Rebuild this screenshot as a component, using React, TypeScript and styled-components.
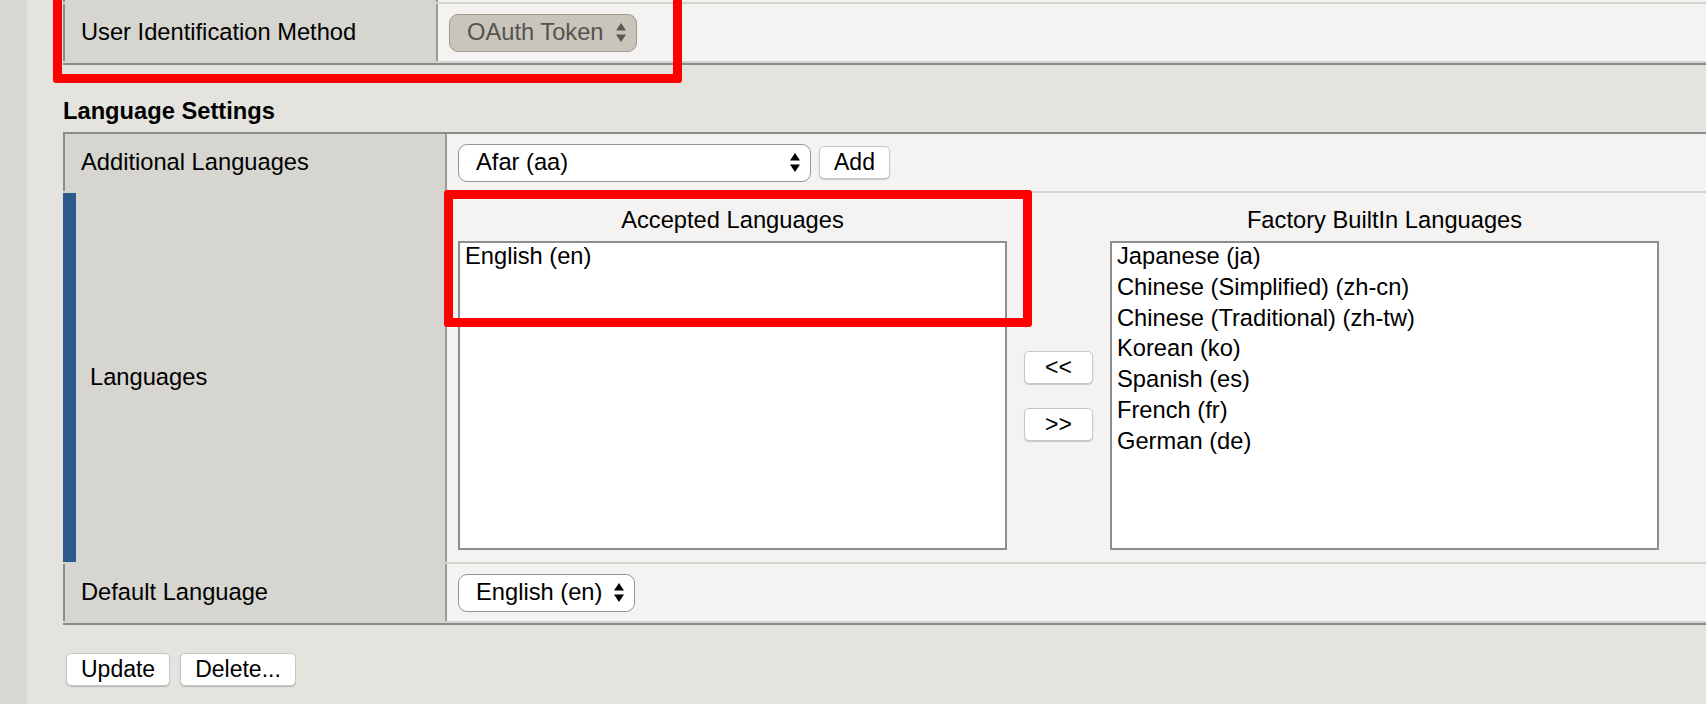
import React from "react";
import styled, { createGlobalStyle } from "styled-components";

const GlobalStyle = createGlobalStyle`
  html, body {
    margin: 0;
    padding: 0;
    background: #e4e3de;
    overflow: hidden;
  }
  body {
    font-family: "Liberation Sans", Arial, Helvetica, sans-serif;
    color: #000;
  }
  *, *::before, *::after { box-sizing: border-box; }
`;

const Page = styled.div`
  position: relative;
  display: flex;
  width: 1706px;
  height: 704px;
  overflow: hidden;
  background: #e4e3de;
`;

const Sidebar = styled.aside`
  flex: 0 0 27px;
  background: #d9d8d3;
`;

const Main = styled.main`
  flex: 1;
  min-width: 0;
  padding-left: 36px;
  font-size: 23.7px;
  line-height: 27px;
`;

const Table = styled.div<{ $topBorder?: boolean }>`
  display: flex;
  flex-direction: column;
  width: calc(100% + 40px);
  border-top: ${(p) => (p.$topBorder ? "2px solid #8c8c8c" : "none")};
  border-bottom: 2px solid #8c8c8c;
`;

const Row = styled.div<{ $label: number; $height?: number }>`
  display: grid;
  grid-template-columns: ${(p) => p.$label}px 1fr;
  min-height: ${(p) => (p.$height ? `${p.$height}px` : "auto")};
  border-bottom: 2px solid #d5d3cf;
`;

const ClippedRow = styled(Row)`
  height: 4px;
  min-height: 4px;
`;

const LabelCell = styled.div<{ $accent?: boolean }>`
  display: flex;
  align-items: center;
  background: #d6d5d0;
  border-left: ${(p) => (p.$accent ? "13px solid #2c5a8c" : "2px solid #8c8c8c")};
  border-right: 2px solid #9a9a9a;
  padding-left: ${(p) => (p.$accent ? "14px" : "16px")};
  white-space: nowrap;
`;

const ValueCell = styled.div`
  display: flex;
  align-items: center;
  gap: 8px;
  padding: 0 11px;
  background: #f4f3f1;
`;

const SectionTitle = styled.h2`
  margin: 33px 0 7px;
  font-size: 23.7px;
  line-height: 27px;
  font-weight: bold;
`;

const SelectBox = styled.div<{ $disabled?: boolean; $width?: number }>`
  display: inline-flex;
  align-items: center;
  justify-content: space-between;
  gap: 12px;
  height: 38px;
  width: ${(p) => (p.$width ? `${p.$width}px` : "auto")};
  padding: 0 10px 0 17px;
  background: ${(p) => (p.$disabled ? "#c9c5bb" : "#ffffff")};
  color: ${(p) => (p.$disabled ? "#555350" : "#000")};
  border: 1px solid ${(p) => (p.$disabled ? "#9e9a92" : "#959595")};
  border-radius: 9px;
  white-space: nowrap;
  line-height: 27px;
`;

const Button = styled.button<{ $width?: number }>`
  height: 33px;
  width: ${(p) => (p.$width ? `${p.$width}px` : "auto")};
  padding: 0 14px;
  font-family: inherit;
  font-size: 23px;
  line-height: 1;
  color: #000;
  background: #ffffff;
  border: 1px solid #c6c6c6;
  border-radius: 5px;
  box-shadow: 0 1px 1px rgba(0, 0, 0, 0.18);
`;

const TransferGrid = styled.div`
  display: grid;
  grid-template-columns: 549px 103px 549px;
  grid-template-rows: 27px 309px;
  row-gap: 7px;
  padding: 14px 11px 12px;
  background: #f4f3f1;
`;

const ListHeader = styled.div<{ $col: number }>`
  grid-column: ${(p) => p.$col};
  grid-row: 1;
  text-align: center;
  white-space: nowrap;
`;

const ListBox = styled.div<{ $col: number }>`
  grid-column: ${(p) => p.$col};
  grid-row: 2;
  background: #ffffff;
  border: 2px solid #8e8e8e;
  padding: 1px 5px 0;
  overflow: hidden;
`;

const Option = styled.div`
  height: 30.8px;
  line-height: 24px;
  white-space: nowrap;
`;

const MoveButtons = styled.div`
  grid-column: 2;
  grid-row: 2;
  display: flex;
  flex-direction: column;
  align-items: center;
  justify-content: center;
  gap: 24px;
`;

const Footer = styled.div`
  display: flex;
  gap: 10px;
  margin-top: 28px;
  padding-left: 3px;
`;

const Annotation = styled.div<{ $x: number; $y: number; $w: number; $h: number }>`
  position: absolute;
  left: ${(p) => p.$x}px;
  top: ${(p) => p.$y}px;
  width: ${(p) => p.$w}px;
  height: ${(p) => p.$h}px;
  border: 9px solid #ff0000;
  border-radius: 3px;
  pointer-events: none;
`;

const Arrows = ({ color = "#000" }: { color?: string }) => (
  <svg width="10" height="19" viewBox="0 0 10 19" aria-hidden="true">
    <polygon points="0,7.5 5,0 10,7.5" fill={color} />
    <polygon points="0,11.5 10,11.5 5,19" fill={color} />
  </svg>
);

const Select = ({
  value,
  disabled,
  width,
}: {
  value: string;
  disabled?: boolean;
  width?: number;
}) => (
  <SelectBox $disabled={disabled} $width={width}>
    <span>{value}</span>
    <Arrows color={disabled ? "#5a5854" : "#000"} />
  </SelectBox>
);

const factory = [
  "Japanese (ja)",
  "Chinese (Simplified) (zh-cn)",
  "Chinese (Traditional) (zh-tw)",
  "Korean (ko)",
  "Spanish (es)",
  "French (fr)",
  "German (de)",
];

export default function App() {
  return (
    <>
      <GlobalStyle />
      <Page>
        <Sidebar />
        <Main>
          <Table>
            <ClippedRow $label={375}>
              <LabelCell />
              <ValueCell />
            </ClippedRow>
            <Row $label={375} $height={59}>
              <LabelCell>User Identification Method</LabelCell>
              <ValueCell>
                <Select value="OAuth Token" disabled />
              </ValueCell>
            </Row>
          </Table>

          <SectionTitle>Language Settings</SectionTitle>

          <Table $topBorder>
            <Row $label={384} $height={59}>
              <LabelCell>Additional Languages</LabelCell>
              <ValueCell>
                <Select value="Afar (aa)" width={353} />
                <Button>Add</Button>
              </ValueCell>
            </Row>
            <Row $label={384}>
              <LabelCell $accent>Languages</LabelCell>
              <TransferGrid>
                <ListHeader $col={1}>Accepted Languages</ListHeader>
                <ListBox $col={1}>
                  <Option>English (en)</Option>
                </ListBox>
                <MoveButtons>
                  <Button $width={69}>&lt;&lt;</Button>
                  <Button $width={69}>&gt;&gt;</Button>
                </MoveButtons>
                <ListHeader $col={3}>Factory BuiltIn Languages</ListHeader>
                <ListBox $col={3}>
                  {factory.map((l) => (
                    <Option key={l}>{l}</Option>
                  ))}
                </ListBox>
              </TransferGrid>
            </Row>
            <Row $label={384} $height={59}>
              <LabelCell>Default Language</LabelCell>
              <ValueCell>
                <Select value="English (en)" />
              </ValueCell>
            </Row>
          </Table>

          <Footer>
            <Button>Update</Button>
            <Button>Delete...</Button>
          </Footer>
        </Main>

        <Annotation $x={53} $y={-20} $w={629} $h={103} />
        <Annotation $x={444} $y={190} $w={588} $h={137} />
      </Page>
    </>
  );
}
